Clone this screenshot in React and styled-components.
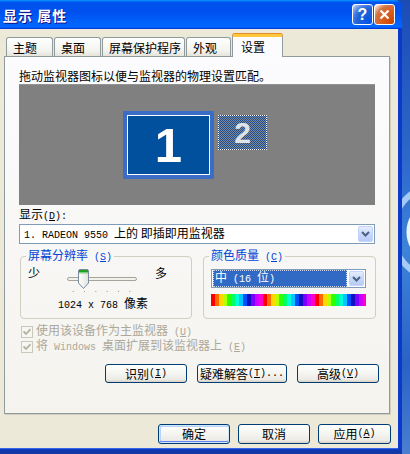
import React from 'react'
import styled, { createGlobalStyle, css } from 'styled-components'

const GlobalStyle = createGlobalStyle`
  html, body {
    margin: 0;
    padding: 0;
  }
  body {
    width: 410px;
    height: 454px;
    overflow: hidden;
    font-family: "Noto Sans CJK SC", "Liberation Sans", sans-serif;
    font-size: 12px;
    color: #000;
  }
`

const bands = [
  '#ff0000', '#ff6a00', '#ffd800', '#b6ff00', '#2bff00', '#00ff6a',
  '#00ffd8', '#00c8ff', '#0050ff', '#1010c0', '#7a00ff', '#d000ff', '#ff00c8'
]
const bandW = 4
const rainbow = bands
  .map((c, i) => `${c} ${i * bandW}px ${(i + 1) * bandW}px`)
  .join(', ')

const Desktop = styled.div`
  width: 410px;
  height: 454px;
  overflow: hidden;
  display: flex;
  align-items: flex-start;
  background:
    radial-gradient(circle at 440px 232px, transparent 26px, rgba(255,255,255,.9) 27px, rgba(255,255,255,.9) 33px, transparent 34px, transparent 44px, rgba(200,230,255,.75) 45px, rgba(200,230,255,.75) 50px, transparent 51px),
    linear-gradient(180deg, #1b4cb6 0%, #2d68cc 35%, #3d84d8 55%, #2a62c4 80%, #4a7fd0 100%);
`

const Window = styled.div`
  width: 402px;
  display: flex;
  flex-direction: column;
`

const TitleBar = styled.div`
  height: 29px;
  border-radius: 0 7px 0 0;
  display: flex;
  align-items: center;
  justify-content: space-between;
  padding: 0 7px 0 3px;
  background: linear-gradient(180deg, #0997ff, #0053ee 8%, #0050ee 40%, #06f 88%, #06f 93%, #005bff 95%, #003dd7 96%, #003dd7);
`

const Title = styled.div`
  color: #fff;
  font-weight: bold;
  font-size: 14px;
  line-height: 16px;
  letter-spacing: 1px;
  text-shadow: 1px 1px 0 #0f1089;
`

const TitleButtons = styled.div`
  display: flex;
  gap: 1px;
`

const TitleButton = styled.div`
  width: 21px;
  height: 21px;
  box-sizing: border-box;
  border: 1px solid #fff;
  border-radius: 3px;
  display: flex;
  align-items: center;
  justify-content: center;
  color: #fff;
  font-family: "Liberation Sans", sans-serif;
  font-weight: bold;
  font-size: 16px;
  ${p => p.$close
    ? css`background: radial-gradient(circle at 90% 90%, #cc4600 0%, #dc6527 55%, #cd7546 70%, #ffccb2 90%, #fff 100%);`
    : css`background: radial-gradient(circle at 90% 90%, #0054e9 0%, #2263d5 55%, #4479e4 70%, #a3bbec 90%, #fff 100%);`}
`

const Frame = styled.div`
  background: #0b3acb;
  padding: 0 4px 6px 0;
  box-shadow: inset 0 -5px 0 #1137a8;
`

const Body = styled.div`
  width: 398px;
  height: 420px;
  box-sizing: border-box;
  background: #ece9d8;
  padding: 5px 8px 0 4px;
  display: flex;
  flex-direction: column;
  border-bottom: 1px solid #3767e0;
`

const TabStrip = styled.div`
  height: 22px;
  display: flex;
  align-items: flex-end;
  gap: 1px;
  padding-left: 2px;
  position: relative;
  z-index: 1;
`

const Tab = styled.div`
  width: ${p => p.$w}px;
  box-sizing: border-box;
  border: 1px solid #919b9c;
  border-bottom: none;
  border-radius: 3px 3px 0 0;
  display: flex;
  align-items: center;
  line-height: 12px;
  ${p => p.$active
    ? css`
      height: 23px;
      margin-bottom: -1px;
      padding-left: 8px;
      background: #fcfcfe;
      border-top: 3px solid #ffc83c;
      box-shadow: 0 -1px 0 #e68b2c;
    `
    : css`
      height: 19px;
      padding: 2px 0 0 6px;
      background: linear-gradient(180deg, #fff, #f3f3ef 70%, #e6e4da);
    `}
`

const Panel = styled.div`
  width: 386px;
  height: 358px;
  box-sizing: border-box;
  border: 1px solid #919b9c;
  background: linear-gradient(180deg, #fcfcfe, #f4f3ee);
  box-shadow: 1px 1px 0 #d0cebf;
  padding: 12px 14px 0 14px;
  display: flex;
  flex-direction: column;
`

const Lat = styled.span`
  font-family: "Liberation Mono", monospace;
  font-size: 10px;
`

const Line = styled.div`
  line-height: 13px;
  height: 13px;
  white-space: nowrap;
`

const MonitorArea = styled.div`
  margin-top: 2px;
  height: 121px;
  background: #808080;
  border-top: 1px solid #939393;
  box-sizing: border-box;
  position: relative;
`

const Monitor = styled.div`
  position: absolute;
  box-sizing: border-box;
  display: flex;
  align-items: center;
  justify-content: center;
  font-family: "Liberation Sans", Arial, sans-serif;
  font-weight: bold;
  line-height: 1;
`

const MainMonitor = styled(Monitor)`
  left: 104px;
  top: 26px;
  width: 91px;
  height: 68px;
  border: 4px solid #3b6dc6;
  background: #00509d;
  box-shadow: inset 0 0 0 1px #fff;
  color: #fff;
  font-size: 49px;
`

const SecondMonitor = styled(Monitor)`
  left: 199px;
  top: 30px;
  width: 49px;
  height: 35px;
  border: 1px dotted #fff;
  background: repeating-conic-gradient(#23508c 0 25%, #7c8799 0 50%) 0 0 / 2px 2px;
  color: #dfe4ec;
  font-size: 30px;
`

const FieldLabel = styled(Line)`
  margin-top: 3px;
  height: 12px;
  line-height: 12px;
`

const Combo = styled.div`
  box-sizing: border-box;
  border: 1px solid #7f9db9;
  background: #fff;
  display: flex;
  align-items: center;
  padding: 1px;
  ${p => p.$w && css`width: ${p.$w}px;`}
`

const ComboText = styled.div`
  flex: 1;
  line-height: 14px;
  white-space: nowrap;
  padding-left: 3px;
  ${p => p.$selected && css`
    background: #316ac5;
    color: #fff;
    outline: 1px dotted #c8d4e8;
    outline-offset: -1px;
    padding-left: 2px;
    margin-right: 2px;
  `}
`

const ArrowButton = styled.div`
  width: 15px;
  height: ${p => p.$h}px;
  box-sizing: border-box;
  border: 1px solid #c3d3fd;
  border-radius: 2px;
  background: linear-gradient(180deg, #e6eefc, #c8d8fb 50%, #b7cbf6);
  display: flex;
  align-items: center;
  justify-content: center;
`

const DisplayCombo = styled(Combo)`
  margin-top: 4px;
  height: 20px;
`

const Groups = styled.div`
  margin-top: 5px;
  margin-left: 1px;
  display: grid;
  grid-template-columns: 172px 173px;
  column-gap: 11px;
`

const Group = styled.fieldset`
  margin: 0;
  min-width: 0;
  padding: 0 7px 6px;
  border: 1px solid #d0d0bf;
  border-radius: 4px;
`

const Legend = styled.legend`
  padding: 0 2px;
  margin-left: -2px;
  line-height: 12px;
  color: #0046d5;
  white-space: nowrap;
`

const SliderRow = styled.div`
  margin-top: 3px;
  display: flex;
  align-items: flex-start;
  line-height: 12px;
`

const SliderSvg = styled.svg`
  margin-left: 22px;
  margin-right: 13px;
  flex: none;
`

const Resolution = styled.div`
  margin-top: 4px;
  text-align: center;
  line-height: 12px;
  padding-right: 6px;
  white-space: nowrap;
`

const ColorCombo = styled(Combo)`
  margin-top: 5px;
  height: 19px;
`

const ColorBar = styled.div`
  margin-top: 6px;
  width: 155px;
  height: 12px;
  background: repeating-linear-gradient(90deg, ${rainbow});
`

const Checks = styled.div`
  margin-top: 6px;
  display: flex;
  flex-direction: column;
  gap: 2px;
  padding-left: 2px;
`

const CheckRow = styled.div`
  height: 13px;
  display: flex;
  align-items: center;
  gap: 3px;
  color: #aca899;
  line-height: 12px;
  white-space: nowrap;
`

const CheckBox = styled.div`
  width: 12px;
  height: 12px;
  box-sizing: border-box;
  border: 1px solid #cac8bb;
  background: #f6f6f2;
  display: flex;
  align-items: center;
  justify-content: center;
`

const ButtonRow = styled.div`
  display: flex;
  justify-content: flex-end;
  gap: ${p => p.$gap}px;
  margin-top: ${p => p.$top}px;
  margin-right: ${p => p.$right}px;
`

const Button = styled.div`
  width: ${p => p.$w}px;
  height: ${p => p.$h}px;
  box-sizing: border-box;
  border: 1px solid #003c74;
  border-radius: 3px;
  background: linear-gradient(180deg, #fff, #f4f4f0 50%, #ecebe6 85%, #d6d0c5);
  display: flex;
  align-items: center;
  justify-content: center;
  line-height: 12px;
  white-space: nowrap;
  ${p => p.$default && css`
    box-shadow: inset 0 0 0 1px #cee7ff, inset 0 -1px 0 1px #6982ee, inset 1px 1px 0 1px #b8d2f8;
  `}
`

const Chevron = () => (
  <svg width="9" height="6" viewBox="0 0 9 6">
    <path d="M1 1 L4.5 4.5 L8 1" fill="none" stroke="#4d6185" strokeWidth="2" />
  </svg>
)

const Check = () => (
  <svg width="8" height="8" viewBox="0 0 8 8">
    <path d="M0.5 3.5 L3 6 L7.5 1.2" fill="none" stroke="#b5b2a0" strokeWidth="1.8" />
  </svg>
)

const ticks = [10.7, 22, 33.3, 44.7, 56, 67.3]

const Slider = () => (
  <SliderSvg width="80" height="26" viewBox="0 0 80 26">
    <defs>
      <linearGradient id="thumb" x1="0" y1="0" x2="1" y2="0">
        <stop offset="0" stopColor="#ffffff" />
        <stop offset="1" stopColor="#e3e3dc" />
      </linearGradient>
    </defs>
    <rect x="5.5" y="10.5" width="69" height="3" rx="1.5" fill="#f2f1ea" stroke="#a5a39a" />
    {ticks.map(x => (
      <rect key={x} x={x} y="24" width="1" height="1" fill="#9a9a9a" />
    ))}
    <path d="M16.5 4 Q16.5 2.5 18 2.5 H25 Q26.5 2.5 26.5 4 V16 L21.5 21.5 L16.5 16 Z"
      fill="url(#thumb)" stroke="#7a8ba0" />
    <rect x="17" y="3" width="9" height="2.5" fill="#21a121" />
    <rect x="17" y="5.5" width="9" height="1" fill="#7cd47c" />
  </SliderSvg>
)

const tabs = [
  { label: '主题', w: 47 },
  { label: '桌面', w: 47 },
  { label: '屏幕保护程序', w: 83 },
  { label: '外观', w: 45 },
  { label: '设置', w: 51, active: true }
]

const App = () => (
  <Desktop>
    <GlobalStyle />
    <Window>
      <TitleBar>
        <Title>显示 属性</Title>
        <TitleButtons>
          <TitleButton>?</TitleButton>
          <TitleButton $close>
            <svg width="11" height="11" viewBox="0 0 11 11">
              <path d="M1.5 1.5 L9.5 9.5 M9.5 1.5 L1.5 9.5" stroke="#fff" strokeWidth="2.2" />
            </svg>
          </TitleButton>
        </TitleButtons>
      </TitleBar>
      <Frame>
        <Body>
          <TabStrip>
            {tabs.map(t => (
              <Tab key={t.label} $w={t.w} $active={t.active}>{t.label}</Tab>
            ))}
          </TabStrip>
          <Panel>
            <Line>拖动监视器图标以便与监视器的物理设置匹配。</Line>
            <MonitorArea>
              <MainMonitor>1</MainMonitor>
              <SecondMonitor>2</SecondMonitor>
            </MonitorArea>
            <FieldLabel>显示<Lat>(<u>D</u>):</Lat></FieldLabel>
            <DisplayCombo>
              <ComboText><Lat>1. RADEON 9550 </Lat>上的 即插即用监视器</ComboText>
              <ArrowButton $h={16}><Chevron /></ArrowButton>
            </DisplayCombo>
            <Groups>
              <Group>
                <Legend>屏幕分辨率<Lat> (<u>S</u>)</Lat></Legend>
                <SliderRow>
                  <span>少</span>
                  <Slider />
                  <span>多</span>
                </SliderRow>
                <Resolution><Lat>1024 x 768 </Lat>像素</Resolution>
              </Group>
              <Group>
                <Legend>颜色质量<Lat> (<u>C</u>)</Lat></Legend>
                <ColorCombo $w={155}>
                  <ComboText $selected>中<Lat> (16 </Lat>位<Lat>)</Lat></ComboText>
                  <ArrowButton $h={15}><Chevron /></ArrowButton>
                </ColorCombo>
                <ColorBar />
              </Group>
            </Groups>
            <Checks>
              <CheckRow>
                <CheckBox><Check /></CheckBox>
                <span>使用该设备作为主监视器<Lat> (<u>U</u>)</Lat></span>
              </CheckRow>
              <CheckRow>
                <CheckBox><Check /></CheckBox>
                <span>将<Lat> Windows </Lat>桌面扩展到该监视器上<Lat> (<u>E</u>)</Lat></span>
              </CheckRow>
            </Checks>
            <ButtonRow $gap={10} $top={11} $right={-4}>
              <Button $w={82} $h={19}>识别<Lat> (<u>I</u>)</Lat></Button>
              <Button $w={90} $h={19}>疑难解答<Lat> (<u>T</u>)...</Lat></Button>
              <Button $w={82} $h={19}>高级<Lat> (<u>V</u>)</Lat></Button>
            </ButtonRow>
          </Panel>
          <ButtonRow $gap={8} $top={10} $right={-1}>
            <Button $w={72} $h={20} $default>确定</Button>
            <Button $w={72} $h={20}>取消</Button>
            <Button $w={73} $h={20}>应用<Lat> (<u>A</u>)</Lat></Button>
          </ButtonRow>
        </Body>
      </Frame>
    </Window>
  </Desktop>
)

export default App
